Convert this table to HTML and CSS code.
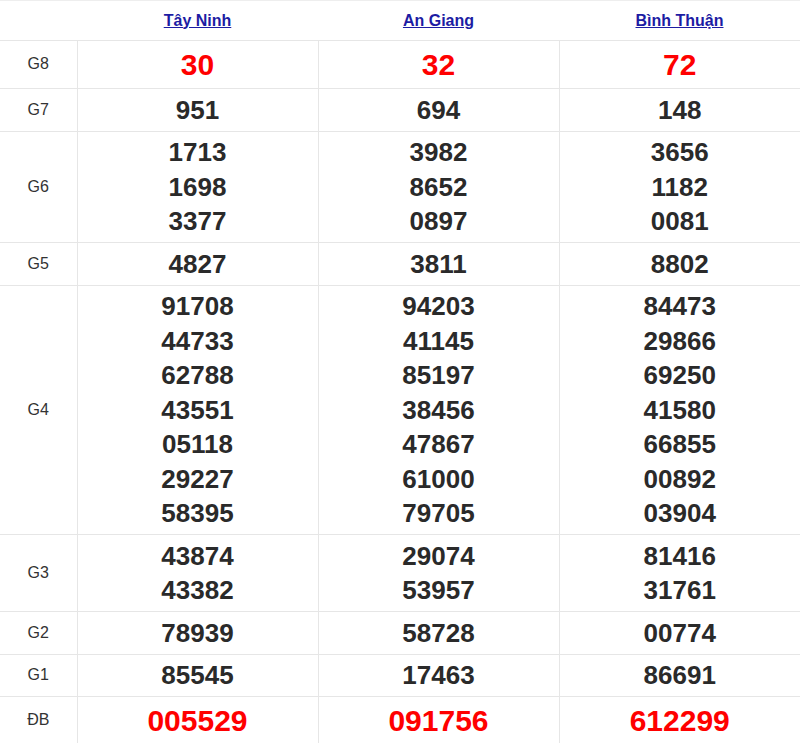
FILE: index.html
```html
<!DOCTYPE html>
<html lang="vi">
<head>
<meta charset="utf-8">
<title>Kết quả xổ số</title>
<link rel="stylesheet" href="styles.css">
</head>
<body>
<table class="kq">
  <colgroup>
    <col class="c-label">
    <col class="c-prov">
    <col class="c-prov">
    <col class="c-prov">
  </colgroup>
  <thead>
    <tr class="head">
      <th></th>
      <th><a href="#">Tây Ninh</a></th>
      <th><a href="#">An Giang</a></th>
      <th><a href="#">Bình Thuận</a></th>
    </tr>
  </thead>
  <tbody>
    <tr class="big">
      <td class="lbl">G8</td>
      <td class="red">30</td><td class="red">32</td><td class="red">72</td>
    </tr>
    <tr>
      <td class="lbl">G7</td>
      <td>951</td><td>694</td><td>148</td>
    </tr>
    <tr>
      <td class="lbl">G6</td>
      <td><div>1713</div><div>1698</div><div>3377</div></td>
      <td><div>3982</div><div>8652</div><div>0897</div></td>
      <td><div>3656</div><div>1182</div><div>0081</div></td>
    </tr>
    <tr>
      <td class="lbl">G5</td>
      <td>4827</td><td>3811</td><td>8802</td>
    </tr>
    <tr>
      <td class="lbl">G4</td>
      <td><div>91708</div><div>44733</div><div>62788</div><div>43551</div><div>05118</div><div>29227</div><div>58395</div></td>
      <td><div>94203</div><div>41145</div><div>85197</div><div>38456</div><div>47867</div><div>61000</div><div>79705</div></td>
      <td><div>84473</div><div>29866</div><div>69250</div><div>41580</div><div>66855</div><div>00892</div><div>03904</div></td>
    </tr>
    <tr>
      <td class="lbl">G3</td>
      <td><div>43874</div><div>43382</div></td>
      <td><div>29074</div><div>53957</div></td>
      <td><div>81416</div><div>31761</div></td>
    </tr>
    <tr>
      <td class="lbl">G2</td>
      <td>78939</td><td>58728</td><td>00774</td>
    </tr>
    <tr>
      <td class="lbl">G1</td>
      <td>85545</td><td>17463</td><td>86691</td>
    </tr>
    <tr class="big">
      <td class="lbl">ĐB</td>
      <td class="red">005529</td><td class="red">091756</td><td class="red">612299</td>
    </tr>
  </tbody>
</table>
</body>
</html>
```

FILE: styles.css
```css
html, body {
  margin: 0;
  padding: 0;
  background: #ffffff;
}

body {
  font-family: "Liberation Sans", Arial, sans-serif;
  color: #2a2a2a;
}

.kq {
  width: 800px;
  border-collapse: collapse;
  table-layout: fixed;
}

.c-label { width: 77px; }
.c-prov { width: 241px; }

.kq th,
.kq td {
  border: 1px solid #e6e6e6;
  text-align: center;
  vertical-align: middle;
  padding: 3.5px 0;
}

.kq tr > :first-child { border-left: 0; }
.kq tr > :last-child { border-right: 0; }

.head th {
  height: 39px;
  border-left: 0;
  border-right: 0;
  border-top: 1px solid #eeeeee;
  font-size: 16px;
  font-weight: bold;
  padding: 0;
}

.head a {
  color: #1c1ca3;
  text-decoration: underline;
}

.kq td {
  font-size: 26px;
  font-weight: bold;
  line-height: 34.5px;
  color: #2a2a2a;
}

.kq td.lbl {
  font-size: 16px;
  font-weight: normal;
  color: #333333;
}

.kq td.red {
  color: #ff0000;
  font-size: 30px;
  line-height: 40px;
}
```
